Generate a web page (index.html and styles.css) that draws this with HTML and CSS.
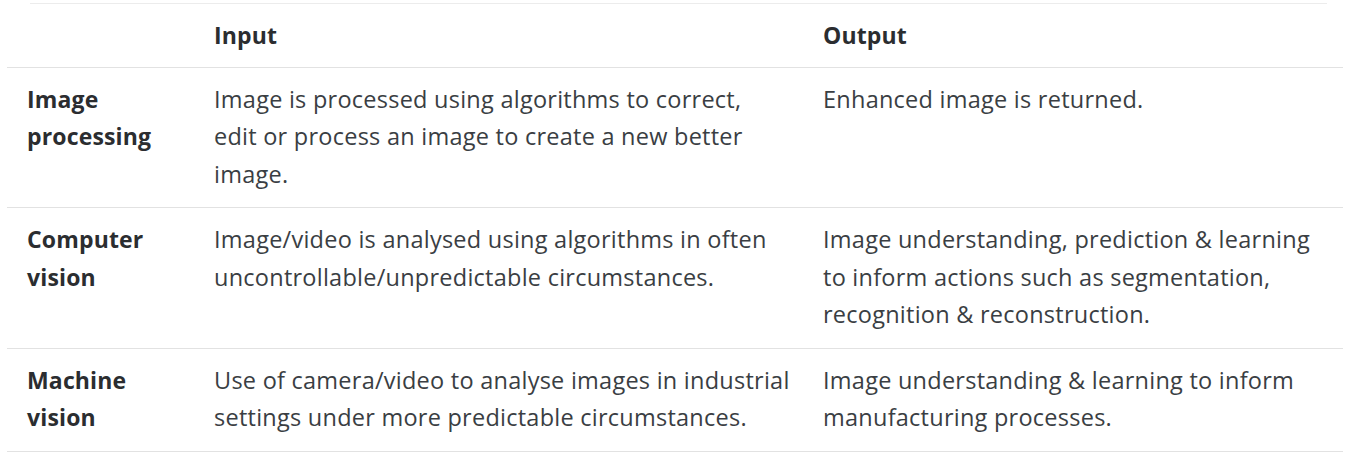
FILE: index.html
```html
<!DOCTYPE html>
<html>
<head>
<meta charset="utf-8">
<link rel="stylesheet" href="styles.css">
</head>
<body>
<div class="page">
  <div class="rule"></div>
  <table class="compare">
    <colgroup>
      <col class="c1">
      <col class="c2">
      <col class="c3">
    </colgroup>
    <thead>
      <tr>
        <th></th>
        <th class="in">Input</th>
        <th class="out">Output</th>
      </tr>
    </thead>
    <tbody>
      <tr>
        <th>Image processing</th>
        <td class="in">Image is processed using algorithms to correct, edit&nbsp;or process an image to create a new better image.</td>
        <td class="out">Enhanced image is returned.</td>
      </tr>
      <tr>
        <th>Computer vision</th>
        <td class="in">Image/video is analysed using algorithms in often uncontrollable/unpredictable circumstances.</td>
        <td class="out">Image understanding, prediction &amp; learning to inform actions such as segmentation, recognition &amp; reconstruction.</td>
      </tr>
      <tr>
        <th>Machine vision</th>
        <td class="in">Use of camera/video to analyse images in industrial settings under more predictable circumstances.</td>
        <td class="out">Image understanding &amp; learning to inform manufacturing processes.</td>
      </tr>
    </tbody>
  </table>
</div>
</body>
</html>
```
FILE: styles.css
```css
html, body {
  margin: 0;
  padding: 0;
  background: #ffffff;
}

.page {
  padding: 3px 14px 0 7px;
  font-family: "Open Sans", "Noto Sans", sans-serif;
  color: #3a3e43;
}

.rule {
  height: 1px;
  background: #ececec;
  margin: 0 16px 0 23px;
}

.compare {
  width: 1336px;
  border-collapse: collapse;
  table-layout: fixed;
}

.c1 { width: 187px; }
.c2 { width: 609px; }
.c3 { width: 540px; }

.compare th,
.compare td {
  text-align: left;
  vertical-align: top;
  line-height: 37.5px;
  padding: 13px 8px 14px 20px;
  border-bottom: 1px solid #e2e2e2;
}

.compare .in {
  padding-right: 0;
}

.compare .out {
  padding-right: 14px;
}

.compare th {
  font-size: 23px;
  letter-spacing: 0.15px;
  font-weight: 700;
  color: #2b2d30;
}

.compare td {
  font-size: 23.5px;
  letter-spacing: 0.25px;
  font-weight: 400;
}

.compare thead th {
  padding-top: 13px;
  padding-bottom: 12px;
}
```
